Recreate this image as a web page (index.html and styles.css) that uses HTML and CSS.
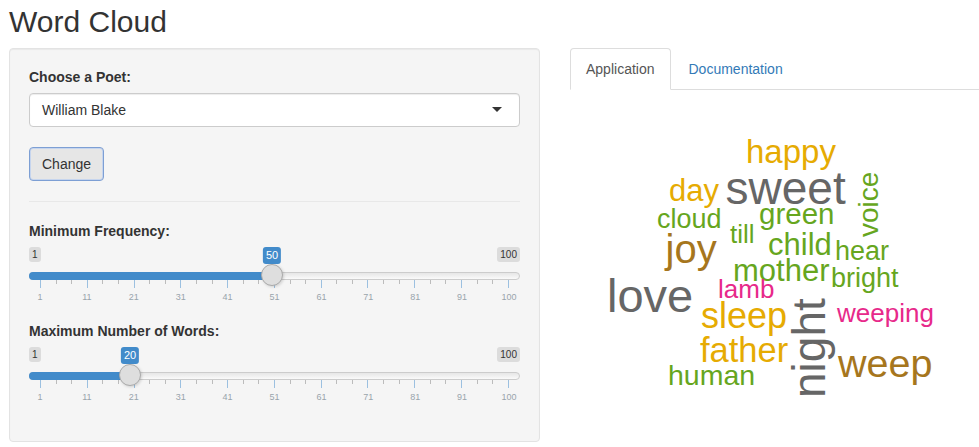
FILE: index.html
```html
<!DOCTYPE html>
<html>
<head>
<meta charset="utf-8">
<title>Word Cloud</title>
<link rel="stylesheet" href="styles.css">
</head>
<body>
<div class="page">
  <h2 class="title">Word Cloud</h2>
  <div class="row">
    <div class="sidebar">
      <form class="well">
        <div class="form-group first">
          <label class="control-label">Choose a Poet:</label>
          <div class="select"><span>William Blake</span><span class="caret"></span></div>
        </div>
        <button class="btn" type="button">Change</button>
        <hr class="sep">
        <div class="form-group">
          <label class="control-label">Minimum Frequency:</label>
          <div class="irs" style="--p:0.49495">
            <div class="irs-minmax"><span class="irs-min">1</span><span class="irs-max">100</span></div>
            <div class="irs-line"></div>
            <div class="irs-grid">
              <i class="pol"></i><i class="pol s"></i><i class="pol s"></i><i class="pol"></i><i class="pol s"></i><i class="pol s"></i><i class="pol"></i><i class="pol s"></i><i class="pol s"></i><i class="pol"></i><i class="pol s"></i><i class="pol s"></i><i class="pol"></i><i class="pol s"></i><i class="pol s"></i><i class="pol"></i><i class="pol s"></i><i class="pol s"></i><i class="pol"></i><i class="pol s"></i><i class="pol s"></i><i class="pol"></i><i class="pol s"></i><i class="pol s"></i><i class="pol"></i><i class="pol s"></i><i class="pol s"></i><i class="pol"></i><i class="pol s"></i><i class="pol s"></i><i class="pol"></i>
            </div>
            <div class="irs-grid-text"><span>1</span><span>11</span><span>21</span><span>31</span><span>41</span><span>51</span><span>61</span><span>71</span><span>81</span><span>91</span><span>100</span></div>
            <span class="irs-bar"></span>
            <span class="irs-slider"></span>
            <span class="irs-single">50</span>
          </div>
        </div>
        <div class="form-group">
          <label class="control-label">Maximum Number of Words:</label>
          <div class="irs" style="--p:0.19192">
            <div class="irs-minmax"><span class="irs-min">1</span><span class="irs-max">100</span></div>
            <div class="irs-line"></div>
            <div class="irs-grid">
              <i class="pol"></i><i class="pol s"></i><i class="pol s"></i><i class="pol"></i><i class="pol s"></i><i class="pol s"></i><i class="pol"></i><i class="pol s"></i><i class="pol s"></i><i class="pol"></i><i class="pol s"></i><i class="pol s"></i><i class="pol"></i><i class="pol s"></i><i class="pol s"></i><i class="pol"></i><i class="pol s"></i><i class="pol s"></i><i class="pol"></i><i class="pol s"></i><i class="pol s"></i><i class="pol"></i><i class="pol s"></i><i class="pol s"></i><i class="pol"></i><i class="pol s"></i><i class="pol s"></i><i class="pol"></i><i class="pol s"></i><i class="pol s"></i><i class="pol"></i>
            </div>
            <div class="irs-grid-text"><span>1</span><span>11</span><span>21</span><span>31</span><span>41</span><span>51</span><span>61</span><span>71</span><span>81</span><span>91</span><span>100</span></div>
            <span class="irs-bar"></span>
            <span class="irs-slider"></span>
            <span class="irs-single">20</span>
          </div>
        </div>
      </form>
    </div>
    <div class="main">
      <ul class="nav-tabs">
        <li class="active"><a href="#app">Application</a></li>
        <li><a href="#doc">Documentation</a></li>
      </ul>
      <div class="tab-content">
        <svg class="cloud" width="409" height="357" viewBox="570 90 409 357">
          <text class="w gold" x="746" y="163" font-size="33">happy</text>
          <text class="w gray" x="725.5" y="204" font-size="46">sweet</text>
          <text class="w gold" x="669" y="201" font-size="31">day</text>
          <text class="w green" transform="translate(878 237) rotate(-90)" font-size="28">voice</text>
          <text class="w green" x="657" y="228" font-size="27">cloud</text>
          <text class="w green" x="759" y="224" font-size="29.5">green</text>
          <text class="w green" x="730" y="243" font-size="26">till</text>
          <text class="w brown" x="665.5" y="263" font-size="40">joy</text>
          <text class="w green" x="768" y="255" font-size="31">child</text>
          <text class="w green" x="835" y="260" font-size="27">hear</text>
          <text class="w green" x="733" y="281" font-size="31">mother</text>
          <text class="w green" x="831" y="287" font-size="27">bright</text>
          <text class="w gray" x="607" y="312" font-size="47">love</text>
          <text class="w pink" x="718" y="298" font-size="26">lamb</text>
          <text class="w gray" transform="translate(825 398) rotate(-90)" font-size="46">night</text>
          <text class="w pink" x="837" y="322" font-size="26">weeping</text>
          <text class="w gold" x="701" y="328" font-size="36">sleep</text>
          <text class="w gold" x="700" y="362" font-size="34.5">father</text>
          <text class="w brown" x="838" y="377" font-size="39.5">weep</text>
          <text class="w green" x="668" y="385" font-size="28.5">human</text>
        </svg>
      </div>
    </div>
  </div>
</div>
</body>
</html>
```
FILE: styles.css
```css
* { box-sizing: border-box; }
html { overflow: hidden; }
body {
  margin: 0;
  font-family: "Liberation Sans", Arial, Helvetica, sans-serif;
  font-size: 14px;
  line-height: 1.42857;
  color: #333;
  background: #fff;
}
.page { padding: 0 0 0 9px; }
.title {
  margin: 5px 0 10px 0;
  font-size: 30px;
  font-weight: 500;
  line-height: 1.1;
  color: #333;
}
.row { display: flex; align-items: flex-start; }
.sidebar { width: 531px; flex: none; }
.well {
  margin: 0;
  padding: 19px;
  background: #f5f5f5;
  border: 1px solid #e3e3e3;
  border-radius: 4px;
  box-shadow: inset 0 1px 1px rgba(0,0,0,.05);
}
.form-group { margin-bottom: 15px; }
.form-group.first { margin-bottom: 20px; }
.control-label {
  display: inline-block;
  margin-bottom: 5px;
  font-weight: bold;
}
.select {
  display: flex;
  align-items: center;
  justify-content: space-between;
  height: 34px;
  padding: 6px 17px 6px 12px;
  background: #fff;
  border: 1px solid #ccc;
  border-radius: 4px;
  box-shadow: inset 0 1px 1px rgba(0,0,0,.075);
  line-height: 20px;
  color: #333;
}
.caret {
  width: 0;
  height: 0;
  border-style: solid;
  border-width: 5px 5px 0 5px;
  border-color: #333 transparent transparent transparent;
}
.btn {
  display: inline-block;
  margin: 0;
  padding: 6px 12px;
  font-family: inherit;
  font-size: 14px;
  line-height: 20px;
  color: #333;
  background: #e6e6e6;
  border: 1px solid #7d9fd4;
  border-radius: 4px;
  box-shadow: inset 0 0 0 1px #c6d5ee;
}
.sep {
  margin: 20px 0;
  border: 0;
  border-top: 1px solid #e8e8e8;
  height: 0;
}
.irs {
  position: relative;
  height: 60px;
  --c: calc(11px + (100% - 22px) * var(--p));
}
.irs-minmax {
  display: flex;
  justify-content: space-between;
  align-items: flex-start;
  height: 25px;
}
.irs-min, .irs-max {
  font-size: 10px;
  line-height: 1.333;
  padding: 1px 3px;
  color: #333;
  background: rgba(0,0,0,.1);
  border-radius: 3px;
}
.irs-line {
  height: 8px;
  border: 1px solid #ccc;
  border-radius: 16px;
  background: linear-gradient(#e6e6e6, #fafafa);
}
.irs-grid {
  display: flex;
  justify-content: space-between;
  align-items: flex-start;
  margin: 0 11px;
  height: 8px;
}
.pol {
  display: block;
  width: 1px;
  height: 8px;
  background: #9cc0e0;
}
.pol.s { height: 4px; background: #bcbcbc; }
.irs-grid-text {
  display: grid;
  grid-template-columns: repeat(11, 1fr);
  margin: 5px -12.45px 0;
  font-size: 9px;
  line-height: 9px;
  color: #99a4ac;
  text-align: center;
}
.irs-bar {
  position: absolute;
  top: 25px;
  left: 0;
  width: var(--c);
  height: 8px;
  background: #428bca;
  border-radius: 16px 0 0 16px;
}
.irs-slider {
  position: absolute;
  top: 17px;
  left: calc(var(--c) - 11px);
  width: 22px;
  height: 22px;
  border: 1px solid #aaa;
  border-radius: 50%;
  background: #dedede;
  box-shadow: 1px 1px 3px rgba(0,0,0,.15);
}
.irs-single {
  position: absolute;
  top: 0;
  left: var(--c);
  transform: translateX(-50%);
  font-size: 11px;
  line-height: 1.333;
  padding: 1px 3px;
  color: #fff;
  background: #428bca;
  border-radius: 3px;
}
.main {
  flex: 1;
  min-width: 0;
  margin-left: 30px;
}
.nav-tabs {
  display: flex;
  margin: 0;
  padding: 0;
  list-style: none;
  border-bottom: 1px solid #ddd;
}
.nav-tabs li { margin-bottom: -1px; }
.nav-tabs a {
  display: block;
  margin-right: 2px;
  padding: 10px 15px;
  line-height: 20px;
  color: #337ab7;
  text-decoration: none;
  border: 1px solid transparent;
  border-radius: 4px 4px 0 0;
}
.nav-tabs .active a {
  color: #555;
  background: #fff;
  border-color: #ddd #ddd transparent;
}
.cloud { display: block; }
.w { font-family: "Liberation Sans", Arial, Helvetica, sans-serif; }
.gray { fill: #666666; }
.brown { fill: #a6761d; }
.gold { fill: #e6ab02; }
.green { fill: #66a61e; }
.pink { fill: #e7298a; }
```
